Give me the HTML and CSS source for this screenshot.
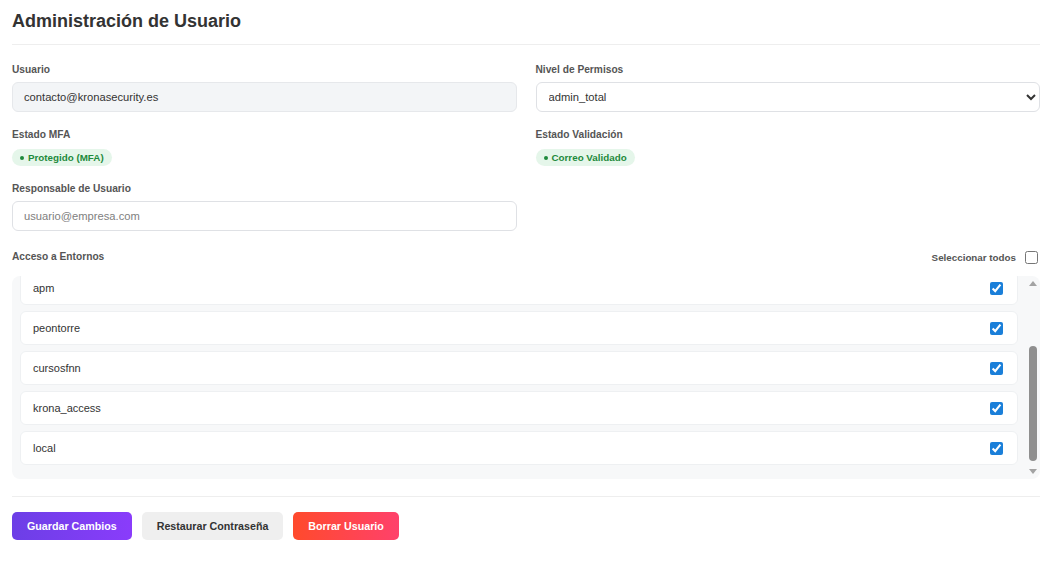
FILE: index.html
```html
<!DOCTYPE html>
<html lang="es">
<head>
    <meta charset="UTF-8">
    <meta name="viewport" content="width=device-width, initial-scale=1.0">
    <title>Administración de Usuario</title>
    <link rel="stylesheet" href="styles.css">
</head>
<body>
    <div class="panel">
        <h1 class="panel-title">Administración de Usuario</h1>

        <div class="form-grid">
            <div class="field">
                <label class="field-label">Usuario</label>
                <input class="input input-readonly" type="text" value="contacto@kronasecurity.es" readonly>
            </div>
            <div class="field">
                <label class="field-label">Nivel de Permisos</label>
                <select class="input select">
                    <option>admin_total</option>
                    <option>admin</option>
                    <option>usuario</option>
                </select>
            </div>
            <div class="field">
                <label class="field-label">Estado MFA</label>
                <div class="badge-row"><span class="badge"><span class="dot"></span>Protegido (MFA)</span></div>
            </div>
            <div class="field">
                <label class="field-label">Estado Validación</label>
                <div class="badge-row"><span class="badge"><span class="dot"></span>Correo Validado</span></div>
            </div>
            <div class="field">
                <label class="field-label">Responsable de Usuario</label>
                <input class="input" type="text" placeholder="usuario@empresa.com">
            </div>
        </div>

        <div class="env-header">
            <span class="field-label">Acceso a Entornos</span>
            <label class="select-all">
                <span>Seleccionar todos</span>
                <input type="checkbox">
            </label>
        </div>

        <div class="env-box">
            <div id="envList" class="env-list">
                <label class="env-item"><span>default</span><input type="checkbox" checked></label>
                <label class="env-item"><span>kronadev</span><input type="checkbox" checked></label>
                <label class="env-item"><span>apm</span><input type="checkbox" checked></label>
                <label class="env-item"><span>peontorre</span><input type="checkbox" checked></label>
                <label class="env-item"><span>cursosfnn</span><input type="checkbox" checked></label>
                <label class="env-item"><span>krona_access</span><input type="checkbox" checked></label>
                <label class="env-item"><span>local</span><input type="checkbox" checked></label>
            </div>
            <div class="scrollbar">
                <span class="sb-arrow sb-up"></span>
                <div class="sb-track"><div class="sb-thumb"></div></div>
                <span class="sb-arrow sb-down"></span>
            </div>
        </div>

        <div class="actions">
            <button class="btn btn-primary">Guardar Cambios</button>
            <button class="btn btn-secondary">Restaurar Contraseña</button>
            <button class="btn btn-danger">Borrar Usuario</button>
        </div>
    </div>

    <script>
        // la lista aparece desplazada hasta el final
        const list = document.getElementById('envList');
        list.scrollTop = list.scrollHeight;
    </script>
</body>
</html>
```

FILE: styles.css
```css
body {
    margin: 0;
    background-color: #FFFFFF;
    font-family: "Liberation Sans", Arial, sans-serif;
    color: #333;
}
input[type="checkbox"] {
    accent-color: #1a7fd9;
}
.panel {
    padding: 11px 14px 20px 12px;
}
.panel-title {
    margin: 0;
    font-size: 18px;
    line-height: 21px;
    font-weight: bold;
    color: #333;
    padding-bottom: 12px;
    border-bottom: 1px solid #eeeeee;
}
.form-grid {
    display: grid;
    grid-template-columns: 1fr 1fr;
    column-gap: 19px;
    row-gap: 16px;
    margin-top: 18px;
}
.field {
    display: flex;
    flex-direction: column;
}
.field-label {
    display: block;
    font-size: 10.2px;
    line-height: 14px;
    font-weight: bold;
    color: #555;
    margin-bottom: 5px;
}
.input {
    box-sizing: border-box;
    height: 30px;
    padding: 0 11px;
    border: 1px solid #dfe1e5;
    border-radius: 6px;
    background-color: #fff;
    font-family: inherit;
    font-size: 11.2px;
    color: #333;
    outline: none;
}
.input::placeholder {
    color: #808080;
}
.input-readonly {
    background-color: #f3f5f7;
    border-color: #e6e8eb;
}
.select {
    padding: 0 8px;
}
.badge-row {
    display: flex;
    margin-top: 2px;
}
.badge {
    display: inline-flex;
    align-items: center;
    gap: 4px;
    padding: 0 8px;
    height: 17px;
    border-radius: 9px;
    background-color: #e5f6ea;
    color: #1e8a3c;
    font-size: 9.8px;
    font-weight: bold;
}
.dot {
    width: 4px;
    height: 4px;
    border-radius: 50%;
    background-color: #1e8a3c;
}
.env-header {
    display: flex;
    justify-content: space-between;
    align-items: center;
    margin-top: 19px;
    margin-bottom: 12px;
}
.env-header .field-label {
    margin-bottom: 0;
}
.select-all {
    display: flex;
    align-items: center;
    gap: 9px;
    font-size: 9.8px;
    font-weight: bold;
    color: #555;
}
.select-all input {
    margin: 0 2px 0 0;
    width: 13px;
    height: 13px;
}
.env-box {
    display: flex;
    height: 203px;
    background-color: #f7f8f9;
    border-radius: 8px;
    overflow: hidden;
}
.env-list {
    flex: 1;
    box-sizing: border-box;
    overflow-y: scroll;
    scrollbar-width: none;
    padding: 8px 7px 8px 8px;
}
.scrollbar {
    width: 15px;
    display: flex;
    flex-direction: column;
    align-items: center;
}
.sb-arrow {
    width: 0;
    height: 0;
    border-left: 4px solid transparent;
    border-right: 4px solid transparent;
}
.sb-up {
    margin: 5px 0 4px;
    border-bottom: 5px solid #a3a3a3;
}
.sb-down {
    margin: 4px 0 5px;
    border-top: 5px solid #a3a3a3;
}
.sb-track {
    flex: 1;
    display: flex;
    flex-direction: column;
    justify-content: flex-end;
    padding-bottom: 4px;
}
.sb-thumb {
    width: 8px;
    height: 115px;
    border-radius: 4px;
    background-color: #8f8f8f;
}
.env-item {
    display: flex;
    justify-content: space-between;
    align-items: center;
    box-sizing: border-box;
    height: 34px;
    margin-bottom: 6px;
    padding: 0 14px 0 12px;
    background-color: #fff;
    border: 1px solid #eef0f2;
    border-radius: 6px;
    font-size: 11px;
    color: #333;
}
.env-item input {
    margin: 0;
    width: 13px;
    height: 13px;
}
.actions {
    display: flex;
    gap: 10px;
    margin-top: 17px;
    padding-top: 15px;
    border-top: 1px solid #eeeeee;
}
.btn {
    height: 28px;
    padding: 0 15px;
    border: none;
    border-radius: 5px;
    font-family: inherit;
    font-size: 10.7px;
    font-weight: bold;
    cursor: pointer;
}
.btn-primary {
    background: linear-gradient(to right, #6c3fe6, #8a3cfb);
    color: #fff;
}
.btn-secondary {
    background-color: #efefef;
    color: #333;
}
.btn-danger {
    background: linear-gradient(to right, #ff4a2c, #ff416b);
    color: #fff;
}
```
